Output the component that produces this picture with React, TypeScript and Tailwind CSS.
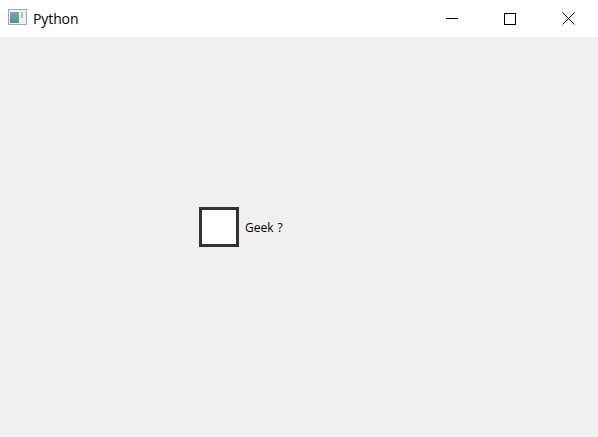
const App = () => {
  return (
    <div className="flex h-[437px] w-[598px] flex-col overflow-hidden bg-[#f0f0f0] font-['Open_Sans',sans-serif] text-black">
      <div className="flex h-[37px] items-center bg-white pl-2">
        <svg width="19" height="17" viewBox="0 0 19 17" className="mb-[2px]">
          <defs>
            <linearGradient id="pane" x1="0" y1="0" x2="0" y2="1">
              <stop offset="0" stopColor="#7fa6b8" />
              <stop offset="1" stopColor="#4f9484" />
            </linearGradient>
          </defs>
          <rect x="0.5" y="0.5" width="18" height="15" fill="#eef0f1" stroke="#a3a7ab" />
          <rect x="2" y="3" width="9" height="11" fill="url(#pane)" />
          <rect x="13" y="3" width="2" height="6" fill="#a9c4bb" />
        </svg>
        <span className="ml-[6px] text-[14px] leading-none tracking-[-0.1px]">Python</span>
        <div className="ml-auto flex h-full">
          <div className="flex h-full w-[58px] items-center justify-center">
            <svg width="12" height="12" viewBox="0 0 12 12">
              <path d="M0 5.5H12" stroke="#000" fill="none" />
            </svg>
          </div>
          <div className="flex h-full w-[58px] items-center justify-center">
            <svg width="12" height="12" viewBox="0 0 12 12">
              <rect x="0.5" y="0.5" width="11" height="11" stroke="#000" fill="none" />
            </svg>
          </div>
          <div className="flex h-full w-[59px] items-center justify-center">
            <svg width="13" height="13" viewBox="0 0 13 13">
              <path d="M0.5 0.5L12.5 12.5M12.5 0.5L0.5 12.5" stroke="#000" fill="none" />
            </svg>
          </div>
        </div>
      </div>
      <div className="pl-[199px] pt-[170px]">
        <label className="flex items-center gap-[6px]">
          <span className="size-10 border-[3px] border-[#333333] bg-white" />
          <span className="pt-[2px] text-[12px] leading-none [word-spacing:1px]">Geek ?</span>
        </label>
      </div>
    </div>
  );
};

export default App;
